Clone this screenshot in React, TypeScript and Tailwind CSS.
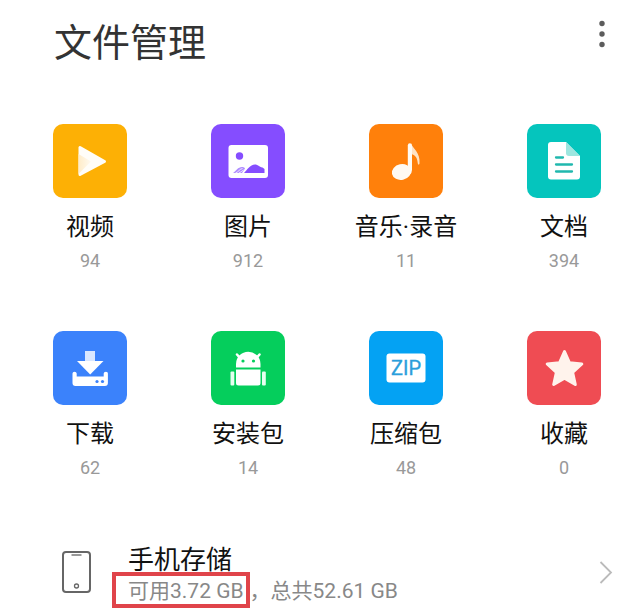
import type { ReactNode } from "react";

type Category = {
  name: string;
  count: number;
  color: string;
  icon: ReactNode;
};

//========================= ICONS ==========================//
const VideoIcon = (
  <>
    <defs>
      <linearGradient id="video-shade" x1="0" x2="1" y1="0" y2="0">
        <stop offset="0" stopColor="#ffecc8" />
        <stop offset="1" stopColor="#fffaf0" />
      </linearGradient>
    </defs>
    <path
      d="M27 23.500v27L51.500 37.500Z"
      fill="#fffdf8"
      stroke="#fffdf8"
      strokeWidth="3"
      strokeLinejoin="round"
    />
    <path d="M25.500 30 38 37.500 25.500 50Z" fill="url(#video-shade)" />
  </>
);

const ImageIcon = (
  <>
    <rect x="17.500" y="21" width="39.500" height="33" rx="3" fill="#fff" />
    <circle cx="28.500" cy="32" r="3.700" fill="#854dff" />
    <path
      d="M33 49c3-3 6-8.500 11-8.500 3 0 4 2.500 7.500 3l2 1.500V49Z"
      fill="#854dff"
    />
    <path d="M22 49c3-2 5-6 9-6 1.500 0 2.500.5 3 1.500L31 49Z" fill="#ae8cff" />
    <path
      d="M24.500 49c3-1 4-4 7-4.500M28 49c1.500-.6 3-2 4.500-3"
      stroke="#fff"
      strokeWidth=".8"
    />
  </>
);

const MusicIcon = (
  <>
    <path
      d="M42 19.500c1.500 5 9.500 8.500 8.500 20-.2 1.500-1.500 1.500-1.700 0C48.300 34 47 31.500 42 30Z"
      fill="#ffe3c4"
    />
    <ellipse
      cx="32.500"
      cy="48"
      rx="9.700"
      ry="7.800"
      fill="#fffaf3"
      transform="rotate(-12 32.500 48)"
    />
    <path d="M38.800 21.500q0-2.200 2-2.200t2.200 2.200V46q0 3-2.500 5h-1.700Z" fill="#fffaf3" />
  </>
);

const DocumentIcon = (
  <>
    <path
      d="M24 18h15l14 14v20.500a3 3 0 0 1-3 3H24a3 3 0 0 1-3-3V21a3 3 0 0 1 3-3Z"
      fill="#fff"
    />
    <path d="M39 18v11a3 3 0 0 0 3 3h11Z" fill="#9de6df" />
    <path
      d="M29 33.500h7M29 40.500h16M29 47.500h16"
      stroke="#20b8ae"
      strokeWidth="2.300"
      strokeLinecap="round"
    />
  </>
);

const DownloadIcon = (
  <>
    <path d="M32 20h10v11H32Z" fill="#d9e7ff" />
    <path d="M24 30h26.500L37.200 43.500Z" fill="#fff" />
    <path
      d="M19.500 42.500q0-1.700 2-1.700t2.200 1.700v3h27v-3q0-1.700 2.200-1.700t2 1.700V52a3 3 0 0 1-3 3H22.500a3 3 0 0 1-3-3Z"
      fill="#fff"
    />
    <circle cx="44" cy="50.500" r="1.600" fill="#3b82fb" />
    <circle cx="49.500" cy="50.500" r="1.600" fill="#3b82fb" />
  </>
);

const PackageIcon = (
  <>
    <path d="M25 36.500V33a12 12 0 0 1 24.500 0v3.500Z" fill="#fff" />
    <path
      d="M26 23.500l3 3.500M48.500 23.500l-3 3.500"
      stroke="#fff"
      strokeWidth="2.500"
      strokeLinecap="round"
    />
    <circle cx="32" cy="30" r="1.600" fill="#05ce5c" />
    <circle cx="42.500" cy="30" r="1.600" fill="#05ce5c" />
    <path
      d="M25 38.500h24.500V52a2.500 2.500 0 0 1-2.500 2.500H27.500A2.500 2.500 0 0 1 25 52Z"
      fill="#fff"
    />
    <rect x="19.500" y="40.500" width="3.800" height="14" rx="1" fill="#e6fff0" />
    <rect x="51" y="40.500" width="3.800" height="14" rx="1" fill="#e6fff0" />
  </>
);

const ZipIcon = (
  <>
    <rect x="17.500" y="22.500" width="39" height="29" rx="3" fill="#fff" />
    <text
      x="37"
      y="44"
      textAnchor="middle"
      fill="#2a9edb"
      stroke="#2a9edb"
      strokeWidth=".3"
      fontFamily="Roboto, sans-serif"
      fontSize="20"
    >
      ZIP
    </text>
  </>
);

const StarIcon = (
  <path
    d="M37.500 20.500l5 11.300 12.300 1.200-9.200 8.300 2.700 12.200-10.800-6.300-10.800 6.300 2.700-12.200-9.200-8.300 12.300-1.200Z"
    fill="#fff3ec"
    stroke="#fff3ec"
    strokeWidth="3"
    strokeLinejoin="round"
  />
);

const CATEGORIES: Category[] = [
  { name: "视频", count: 94, color: "bg-[#fdb005]", icon: VideoIcon },
  { name: "图片", count: 912, color: "bg-[#854dff]", icon: ImageIcon },
  { name: "音乐·录音", count: 11, color: "bg-[#ff800b]", icon: MusicIcon },
  { name: "文档", count: 394, color: "bg-[#05c5bd]", icon: DocumentIcon },
  { name: "下载", count: 62, color: "bg-[#3b82fb]", icon: DownloadIcon },
  { name: "安装包", count: 14, color: "bg-[#05ce5c]", icon: PackageIcon },
  { name: "压缩包", count: 48, color: "bg-[#04a2f3]", icon: ZipIcon },
  { name: "收藏", count: 0, color: "bg-[#ef4c53]", icon: StarIcon },
];

function CategoryTile({ category }: { category: Category }) {
  return (
    <button type="button" className="flex w-[74px] flex-col items-center">
      <span className={`size-[74px] rounded-[10px] ${category.color}`}>
        <svg viewBox="0 0 74 74" fill="none" className="size-full" aria-hidden="true">
          {category.icon}
        </svg>
      </span>
      <span className="mt-[11px] text-[24px] leading-9 whitespace-nowrap text-[#111]">
        {category.name}
      </span>
      <span className="mt-1 text-[18px] leading-6 text-[#999]">{category.count}</span>
    </button>
  );
}

export default function App() {
  return (
    <main className="bg-white pb-1 font-[Roboto,'Noto_Sans_CJK_SC',sans-serif]">
      <header className="flex items-start justify-between pt-3 pr-7 pl-[54px]">
        <h1 className="text-[38px] leading-[62px] text-[#333]">文件管理</h1>
        <button type="button" aria-label="更多" className="mt-1 h-9 w-5">
          <svg viewBox="0 0 20 36" fill="#5c5c5c" className="size-full" aria-hidden="true">
            <circle cx="10" cy="7.500" r="2.700" />
            <circle cx="10" cy="18" r="2.700" />
            <circle cx="10" cy="28.500" r="2.700" />
          </svg>
        </button>
      </header>

      <section className="mt-[50px] grid grid-cols-[repeat(4,74px)] justify-between gap-y-[58px] pr-[39px] pl-[53px]">
        {CATEGORIES.map((category) => (
          <CategoryTile key={category.name} category={category} />
        ))}
      </section>

      <button
        type="button"
        className="mt-[58px] flex w-full items-center pr-[27px] pl-[61px] text-left"
      >
        <svg width="32" height="44" viewBox="0 0 32 44" fill="none" className="shrink-0" aria-hidden="true">
          <rect x="2" y="2" width="27" height="40" rx="3" stroke="#666" strokeWidth="2" />
          <path d="M10.500 5h10" stroke="#777" strokeWidth="1.500" />
          <circle cx="15.500" cy="36" r="2" stroke="#666" strokeWidth="1.300" />
        </svg>
        <span className="ml-[35px] flex flex-1 flex-col pt-1.5">
          <span className="text-[26px] leading-8 text-[#111]">手机存储</span>
          <span className="text-[21px] leading-[30px] text-[#888]">
            <span className="relative mr-1.5 inline-block">
              可用3.72 GB
              <span className="absolute -top-1 -right-1.5 -bottom-0.5 -left-4 border-4 border-[#e0444a]" />
            </span>
            {"\uFF0C"}总共52.61 GB
          </span>
        </span>
        <svg width="16" height="24" viewBox="0 0 16 24" fill="none" className="shrink-0" aria-hidden="true">
          <path d="M3.500 2l10.500 10.500L3.500 23" stroke="#bbb" strokeWidth="1.800" />
        </svg>
      </button>
    </main>
  );
}
